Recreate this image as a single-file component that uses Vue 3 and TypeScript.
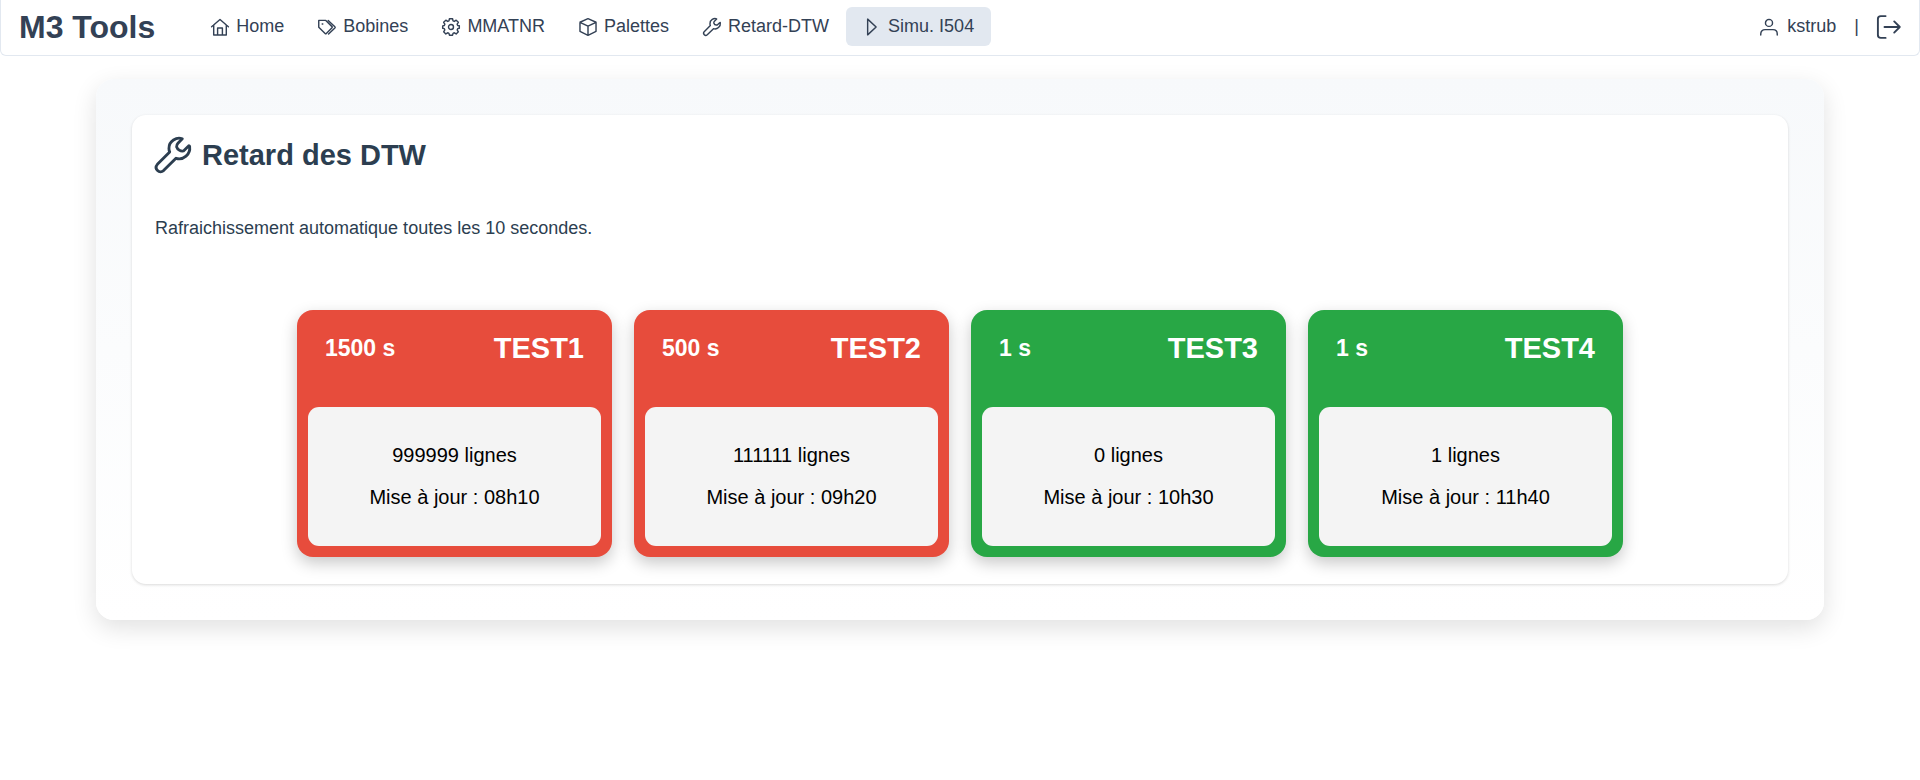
<script setup lang="ts">
interface NavItem {
  label: string
  icon: string
  active?: boolean
}

interface DtwStatus {
  name: string
  delay: number
  lines: number
  updatedAt: string
}

const icons: Record<string, string> = {
  home: 'M.8 11.6 12 2l11.2 9.6M3.6 9.4V22.600h16.8V9.4M8.8 22.600v-9.200h6.4v9.200',
  tags: 'M1 3.2h9.4l8.3 8.3q.8.8 0 1.6l-7.6 7.6q-.8.8-1.6 0L1 12.4zM13.6 3.2l8.9 8.4q.9.9 0 1.8l-8.4 7.8M5.6 7.9h.8',
  cog: 'M9.9 1h4.2l.6 2.9 1.7.7 2.5-1.7 2.9 2.9-1.6 2.5.7 1.7 2.2.4v3.2l-2.2.6-.7 1.7 1.6 2.5-2.9 2.9-2.5-1.6-1.7.7-.6 2.5H9.9l-.6-2.5-1.7-.7-2.5 1.6-2.9-2.9 1.6-2.5-.7-1.7L.9 13.7v-3.2l2.2-.5.7-1.7-1.6-2.5 2.9-2.900 2.5 1.7 1.7-.7zM12 8.7a3.3 3.3 0 1 0 0 6.6 3.3 3.3 0 0 0 0-6.6z',
  box: 'M12 .9 22.7 5.700v12.100L12 23.1 1.3 17.800V5.700zM1.3 5.700 12 10.8l10.7-5.100M12 10.8v12.3',
  wrench:
    'M18.2 1.2C14.5-.2 9.2 2.5 9.3 7.6Q9.3 9 9.8 10L1.6 18.2C.5 19.5.6 21.2 1.7 22.3 2.8 23.4 4.5 23.4 5.7 22.4L14 14.2C19 15.8 23.8 11.4 23.1 6.4Q22.9 5.4 22.2 6.2L19 9.3C17 9.7 14.9 8.3 14.4 6.6 14.3 5.4 14.5 5 15.3 4.2Z',
  play: 'M6.2 1.5v21L17.5 12z',
  user: 'M12 1.8a4.7 4.7 0 1 0 0 9.4 4.7 4.7 0 0 0 0-9.4zM1 22.800v-1.600c0-3.5 2.5-5.7 5.7-5.7h10.6c3.2 0 5.7 2.2 5.7 5.7v1.6',
  signOut: 'M8.6 22.9H3.8c-1.6 0-2.9-1.2-2.9-2.8V3.9C.9 2.3 2.2 1.1 3.8 1.1h4.8M7.5 12h15.3M17.2 6.4 22.8 12l-5.6 5.6',
}

const navItems: NavItem[] = [
  { label: 'Home', icon: 'home' },
  { label: 'Bobines', icon: 'tags' },
  { label: 'MMATNR', icon: 'cog' },
  { label: 'Palettes', icon: 'box' },
  { label: 'Retard-DTW', icon: 'wrench' },
  { label: 'Simu. I504', icon: 'play', active: true },
]

const statuses: DtwStatus[] = [
  { name: 'TEST1', delay: 1500, lines: 999999, updatedAt: '08h10' },
  { name: 'TEST2', delay: 500, lines: 111111, updatedAt: '09h20' },
  { name: 'TEST3', delay: 1, lines: 0, updatedAt: '10h30' },
  { name: 'TEST4', delay: 1, lines: 1, updatedAt: '11h40' },
]

const lateThreshold = 60
const isLate = (status: DtwStatus): boolean => status.delay > lateThreshold
</script>

<template>
  <div class="page">
    <header class="menubar">
      <span class="brand">M3 Tools</span>
      <nav class="nav">
        <a
          v-for="item in navItems"
          :key="item.label"
          href="#"
          class="nav-link"
          :class="{ active: item.active }"
        >
          <svg class="icon" viewBox="0 0 24 24" aria-hidden="true"><path :d="icons[item.icon]" /></svg>
          <span>{{ item.label }}</span>
        </a>
      </nav>
      <div class="account">
        <span class="user">
          <svg class="icon" viewBox="0 0 24 24" aria-hidden="true"><path :d="icons.user" /></svg>
          <span>kstrub</span>
        </span>
        <span>|</span>
        <button type="button" class="logout" aria-label="Déconnexion">
          <svg class="icon" viewBox="0 0 24 24" aria-hidden="true"><path :d="icons.signOut" /></svg>
        </button>
      </div>
    </header>

    <main class="panel">
      <section class="card">
        <h1 class="title">
          <svg class="icon" viewBox="0 0 24 24" aria-hidden="true"><path :d="icons.wrench" /></svg>
          <span>Retard des DTW</span>
        </h1>
        <p class="note">Rafraichissement automatique toutes les 10 secondes.</p>
        <div class="tiles">
          <article
            v-for="status in statuses"
            :key="status.name"
            class="tile"
            :class="{ late: isLate(status) }"
          >
            <div class="tile-head">
              <span class="delay">{{ status.delay }} s</span>
              <h2 class="name">{{ status.name }}</h2>
            </div>
            <div class="tile-body">
              <p>{{ status.lines }} lignes</p>
              <p>Mise à jour : {{ status.updatedAt }}</p>
            </div>
          </article>
        </div>
      </section>
    </main>
  </div>
</template>

<style>
body {
  margin: 0;
  background: #fff;
}
</style>

<style scoped>
.page {
  font-family: "Liberation Sans", Arial, sans-serif;
  font-size: 18px;
  line-height: 21px;
  color: #334155;
}

.icon {
  flex: none;
  width: 18px;
  height: 18px;
  overflow: visible;
  fill: none;
  stroke: currentColor;
  stroke-width: 1.9;
  stroke-linejoin: round;
  stroke-linecap: round;
}

.menubar {
  display: flex;
  align-items: center;
  padding: 7px 18px 9px;
  border: 1px solid #e2e8f0;
  border-top: 0;
  border-radius: 0 0 6px 6px;
}

.brand {
  margin-right: 39px;
  font-size: 32px;
  line-height: 36px;
  font-weight: bold;
}

.nav {
  display: flex;
  flex: 1;
}

.nav-link {
  display: flex;
  align-items: center;
  gap: 7px;
  padding: 9px 17px;
  border-radius: 6px;
  color: inherit;
  text-decoration: none;
}

.nav-link.active {
  background: #e2e8f0;
}

.account {
  display: flex;
  align-items: center;
  gap: 18px;
}

.user {
  display: flex;
  align-items: center;
  gap: 9px;
}

.logout {
  display: flex;
  padding: 0;
  border: 0;
  background: none;
  color: inherit;
  cursor: pointer;
}

.logout .icon {
  width: 24px;
  height: 24px;
}

.panel {
  width: 90%;
  box-sizing: border-box;
  margin: 23px auto 36px;
  padding: 36px;
  border-radius: 18px;
  background: linear-gradient(to bottom, #f7f9fb, #fff);
  box-shadow: 0 8px 24px rgba(0, 0, 0, 0.12);
}

.card {
  padding: 22px 23px 27px;
  border-radius: 14px;
  background: #fff;
  box-shadow: 0 1px 3px rgba(0, 0, 0, 0.15);
  color: #2c3e50;
}

.title {
  display: flex;
  align-items: center;
  gap: 11px;
  margin: 0;
  font-size: 29px;
  line-height: 36px;
}

.title .icon {
  width: 36px;
  height: 36px;
}

.note {
  margin: 45px 0 71px;
}

.tiles {
  display: flex;
  flex-wrap: wrap;
  justify-content: center;
  gap: 22px;
}

.tile {
  width: 315px;
  box-sizing: border-box;
  padding: 11px;
  border-radius: 16px;
  background: #28a745;
  box-shadow: 0 6px 16px rgba(0, 0, 0, 0.22);
}

.tile.late {
  background: #e74c3c;
}

.tile-head {
  display: flex;
  align-items: center;
  justify-content: space-between;
  padding: 11px 17px 43px;
  color: #fff;
  font-weight: bold;
  line-height: 32px;
}

.delay {
  font-size: 23px;
}

.name {
  margin: 0;
  font-size: 29px;
}

.tile-body {
  display: grid;
  gap: 20px;
  padding: 37px 11px 38px;
  border-radius: 11px;
  background: #f4f4f4;
  color: #000;
  font-size: 20px;
  line-height: 22px;
  text-align: center;
}

.tile-body p {
  margin: 0;
}
</style>
